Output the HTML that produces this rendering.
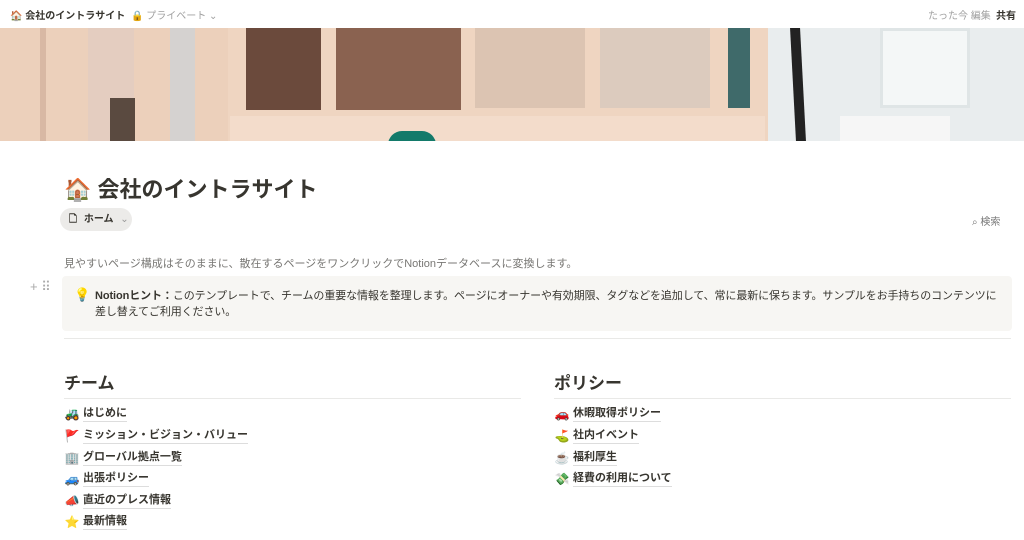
<!DOCTYPE html>
<html><head><meta charset="utf-8"><style>
*{margin:0;padding:0;box-sizing:border-box}
body{width:1024px;height:540px;overflow:hidden;background:#fff;font-family:"Liberation Sans","Noto Sans CJK JP",sans-serif;color:#37352f;position:relative}
.a{position:absolute}
.top{font-size:10px;white-space:nowrap}
.cover{left:0;top:28px;width:1024px;height:113px;background:#f1d9c8;overflow:hidden}
.item{position:absolute;font-size:11px;font-weight:bold;display:flex;align-items:center;white-space:nowrap}
.item span.e{width:16px;font-size:12px;margin-right:3px;text-align:center}
.item span.t{border-bottom:1px solid #ddd;line-height:15px}
h2{position:absolute;font-size:17px;font-weight:bold}
.hr{position:absolute;height:1px;background:#e9e9e7}
</style></head><body>
<div class="a top" style="left:10px;top:7px;font-weight:bold">🏠 会社のイントラサイト</div>
<div class="a top" style="left:131px;top:7px;color:#a0a0a0">🔒 プライベート ⌄</div>
<div class="a top" style="left:928px;top:7px;color:#a0a0a0">たった今 編集</div>
<div class="a top" style="left:996px;top:7px;font-weight:bold">共有</div>

<div class="a cover">
 <div class="a" style="left:0;top:0;width:230px;height:113px;background:#ecd0bb"></div>
 <div class="a" style="left:40px;top:0;width:6px;height:113px;background:#d8b8a4"></div>
 <div class="a" style="left:88px;top:0;width:46px;height:113px;background:#e4cdc0"></div>
 <div class="a" style="left:170px;top:0;width:25px;height:113px;background:#d5d2d0"></div>
 <div class="a" style="left:110px;top:70px;width:25px;height:43px;background:#5a4a40"></div>
 <div class="a" style="left:228px;top:0;width:540px;height:113px;background:#efd5c1"></div>
 <div class="a" style="left:246px;top:0;width:75px;height:82px;background:#6b4a3c"></div>
 <div class="a" style="left:336px;top:0;width:125px;height:82px;background:#8a6250"></div>
 <div class="a" style="left:475px;top:0;width:110px;height:80px;background:#dcc4b2"></div>
 <div class="a" style="left:600px;top:0;width:110px;height:80px;background:#dccbbe"></div>
 <div class="a" style="left:728px;top:0;width:22px;height:80px;background:#3f6a6a"></div>
 <div class="a" style="left:230px;top:88px;width:535px;height:25px;background:#f3dccb"></div>
 <div class="a" style="left:388px;top:103px;width:48px;height:14px;border-radius:24px 24px 0 0;background:#137a6a"></div>
 <div class="a" style="left:768px;top:0;width:256px;height:113px;background:#e9edee"></div>
 <div class="a" style="left:793px;top:0;width:10px;height:113px;background:#222;transform:skewX(3deg)"></div>
 <div class="a" style="left:880px;top:0;width:90px;height:80px;background:#f4f7f7;border:3px solid #dfe5e6"></div>
 <div class="a" style="left:840px;top:88px;width:110px;height:25px;background:#f6f6f6"></div>
</div>

<div class="a" style="left:64px;top:172px;font-size:22px;font-weight:bold;white-space:nowrap">🏠 会社のイントラサイト</div>
<div class="a" style="left:60px;top:208px;width:72px;height:23px;border-radius:12px;background:#ecebe9;font-size:10px;font-weight:bold;line-height:23px;padding-left:9px;white-space:nowrap;word-spacing:4px">🗋 ホーム <span style="color:#999;font-weight:normal">⌄</span></div>
<div class="a" style="left:972px;top:213px;font-size:10px;color:#777;white-space:nowrap">⌕ 検索</div>

<div class="a" style="left:64px;top:255px;font-size:11px;color:#787774;white-space:nowrap">見やすいページ構成はそのままに、散在するページをワンクリックでNotionデータベースに変換します。</div>
<div class="a" style="left:30px;top:279px;font-size:13px;color:#aaa">+ ⠿</div>
<div class="a" style="left:62px;top:276px;width:950px;height:55px;background:#f7f6f3;border-radius:4px"></div>
<div class="a" style="left:74px;top:287px;font-size:13px">💡</div>
<div class="a" style="left:95px;top:288px;width:912px;font-size:11px;line-height:16px;letter-spacing:-0.1px">
<b>Notionヒント：</b>このテンプレートで、チームの重要な情報を整理します。ページにオーナーや有効期限、タグなどを追加して、常に最新に保ちます。サンプルをお手持ちのコンテンツに差し替えてご利用ください。</div>
<div class="hr" style="left:64px;top:338px;width:947px"></div>

<h2 style="left:64px;top:369px">チーム</h2>
<div class="hr" style="left:64px;top:398px;width:457px"></div>
<h2 style="left:554px;top:369px">ポリシー</h2>
<div class="hr" style="left:554px;top:398px;width:457px"></div>

<div class="item" style="left:64px;top:406px"><span class="e">🚜</span><span class="t">はじめに</span></div>
<div class="item" style="left:64px;top:428px"><span class="e">🚩</span><span class="t">ミッション・ビジョン・バリュー</span></div>
<div class="item" style="left:64px;top:450px"><span class="e">🏢</span><span class="t">グローバル拠点一覧</span></div>
<div class="item" style="left:64px;top:471px"><span class="e">🚙</span><span class="t">出張ポリシー</span></div>
<div class="item" style="left:64px;top:493px"><span class="e">📣</span><span class="t">直近のプレス情報</span></div>
<div class="item" style="left:64px;top:514px"><span class="e">⭐</span><span class="t">最新情報</span></div>

<div class="item" style="left:554px;top:406px"><span class="e">🚗</span><span class="t">休暇取得ポリシー</span></div>
<div class="item" style="left:554px;top:428px"><span class="e">⛳</span><span class="t">社内イベント</span></div>
<div class="item" style="left:554px;top:450px"><span class="e">☕</span><span class="t">福利厚生</span></div>
<div class="item" style="left:554px;top:471px"><span class="e">💸</span><span class="t">経費の利用について</span></div>
</body></html>
